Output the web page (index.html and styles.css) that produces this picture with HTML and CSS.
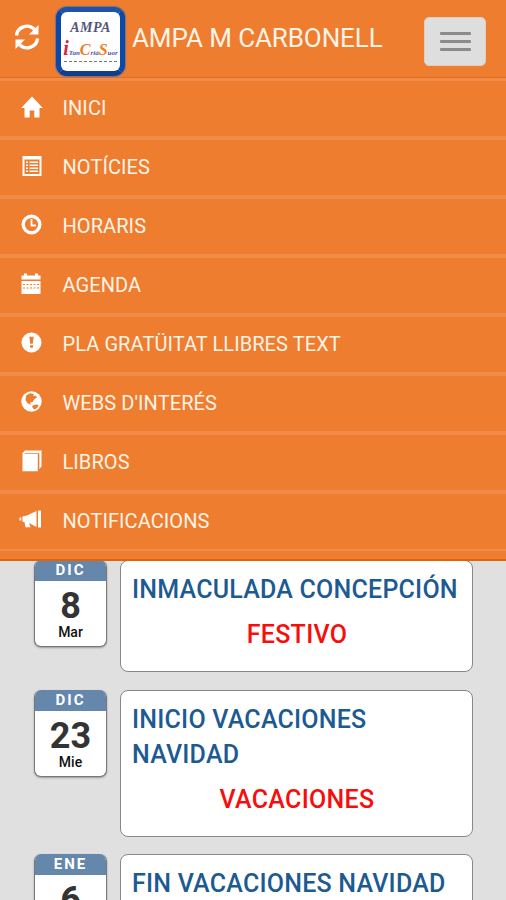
FILE: index.html
```html
<!DOCTYPE html>
<html lang="ca">
<head>
	<meta charset="utf-8" />
	<meta name="viewport" content="width=device-width, user-scalable=no" />
	<title>AMPA M CARBONELL</title>
	<link rel="stylesheet" href="styles.css">
</head>
<body>
	<nav class="navbar">
		<header class="navbar-header">
			<svg class="refresh" viewBox="0 0 26 26">
				<path d="M2.5 11.5A10.5 10 0 0 1 20.4 5.2M23.5 14.5A10.5 10 0 0 1 5.6 20.8" fill="none" stroke="#fff" stroke-width="3.4"/>
				<path d="M24.5 1v9.5H15zM1.5 25v-9.5H11z"/>
			</svg>
			<div class="logo">
				<span class="logo-top">AMPA</span>
				<span class="logo-name"><b class="red">i</b>Tan<b>C</b>rià<b>S</b>uor</span>
				<span class="logo-line"></span>
			</div>
			<a class="brand" href="#">AMPA M CARBONELL</a>
			<button class="toggle" type="button" aria-label="Menu">
				<span></span>
				<span></span>
				<span></span>
			</button>
		</header>
		<ul class="menu">
			<li><a href="#"><svg viewBox="0 0 22 22"><path d="M11 .5 21.8 12H18.500v9.500H13.300v-7H8.700v7H3.500V12H.2z"/></svg>INICI</a></li>
			<li><a href="#"><svg viewBox="0 0 22 22"><path fill-rule="evenodd" d="M1.500 1h19v20h-19zM3.500 4.500v14.500h15V4.500z"/><path d="M5 6.500h2v1.500H5zM8.500 6.500h8.500v1.500H8.500zM5 9.500h2V11H5zM8.500 9.500h8.500V11H8.500zM5 12.500h2V14H5zM8.500 12.500h8.500V14H8.500zM5 15.500h2V17H5zM8.500 15.500h8.500V17H8.500z"/></svg>NOTÍCIES</a></li>
			<li><a href="#"><svg viewBox="0 0 22 22"><circle cx="10.500" cy="10.500" r="8.300" fill="none" stroke="#fff" stroke-width="3.400"/><path d="M10.500 5v6.500H15" fill="none" stroke="#fff" stroke-width="1.800"/></svg>HORARIS</a></li>
			<li><a href="#"><svg viewBox="0 0 22 22"><path d="M.5 2.500H3V.5h3v2h8V.5h3v2h2.500v4H.5z"/><path fill-rule="evenodd" d="M.5 8h19v13H.5zM2 11v1h2V11zM5.500 11v1h2v-1zM9 11v1h2v-1zM12.500 11v1h2v-1zM16 11v1h2v-1zM2 14.500v1h2v-1zM5.500 14.500v1h2v-1zM9 14.500v1h2v-1zM12.500 14.500v1h2v-1zM16 14.500v1h2v-1z"/></svg>AGENDA</a></li>
			<li><a href="#"><svg viewBox="0 0 22 22"><circle cx="10.500" cy="10.500" r="10"/><path class="hole" d="M8.300 4.800h4.400l-.9 7H9.200zM9 13.200h3v2.500H9z"/></svg>PLA GRATÜITAT LLIBRES TEXT</a></li>
			<li><a href="#"><svg viewBox="0 0 22 22"><circle cx="10.500" cy="10.500" r="10.200"/><path class="hole" d="M5.200 4.500 9 2.300l4 .7-1 2 2.500-.5 1.500 2-2.500 1.500-2 3-2.500.5 1 2.300-3.500-1.600L4.500 9zM11 15l3.500-1.500 3 .5-1 2.500-3 2-1.500-1z"/></svg>WEBS D'INTERÉS</a></li>
			<li><a href="#"><svg viewBox="0 0 22 22"><path d="M1.500 3 4 .5h16.500v16L18.300 19V3.300H4.300L3.500 4h13.300v17.200H1.500z"/></svg>LIBROS</a></li>
			<li><a href="#"><svg class="wide" viewBox="0 0 24 22"><path d="M.5 8.500h1.800v3H.5zM3.500 7.500 8 6.500 17.500 2v16L10 14l1.500 4.300H6.500l-1-5-2-.5zM19 1.500h3v17h-3z"/></svg>NOTIFICACIONS</a></li>
		</ul>
	</nav>

	<main class="agenda">
		<article class="event">
			<div class="date">
				<span class="month">DIC</span>
				<span class="day">8</span>
				<span class="weekday">Mar</span>
			</div>
			<div class="card">
				<h2>INMACULADA CONCEPCIÓN</h2>
				<p>FESTIVO</p>
			</div>
		</article>
		<article class="event">
			<div class="date">
				<span class="month">DIC</span>
				<span class="day">23</span>
				<span class="weekday">Mie</span>
			</div>
			<div class="card">
				<h2>INICIO VACACIONES NAVIDAD</h2>
				<p>VACACIONES</p>
			</div>
		</article>
		<article class="event">
			<div class="date">
				<span class="month">ENE</span>
				<span class="day">6</span>
			</div>
			<div class="card">
				<h2>FIN VACACIONES NAVIDAD</h2>
			</div>
		</article>
	</main>
</body>
</html>
```
FILE: styles.css
```css
* {
	box-sizing: border-box;
}

body {
	display: flex;
	flex-direction: column;
	height: 100vh;
	margin: 0;
	overflow: hidden;
	background-color: #e0e0e0;
	font-family: Roboto, "Liberation Sans", sans-serif;
}

a {
	color: #fff3e6;
	text-decoration: none;
}

svg {
	fill: #fff;
}


/* Navigation
 * ========== */

.navbar {
	position: relative;
	z-index: 1;
	flex: none;
	height: 561px;
	background-color: #ee7d30;
	border-bottom: 2px solid #dc6510;
}

.navbar-header {
	display: flex;
	align-items: flex-start;
	height: 78px;
	padding: 6px 20px 0 14px;
	border-bottom: 1px solid #df6d20;
}

.refresh {
	width: 26px;
	height: 26px;
	margin-top: 18px;
}

.logo {
	display: flex;
	flex-direction: column;
	align-items: center;
	width: 69px;
	height: 69px;
	margin: 1px 1px 0 16px;
	padding-top: 8px;
	background-color: #fff;
	border: 5px solid #0d47a8;
	border-top-color: #1c55a8;
	border-bottom-color: #123c8c;
	border-radius: 11px;
	box-shadow: 0 0 1px 1px #7b7080;
	font-family: "Liberation Serif", serif;
	font-style: italic;
	white-space: nowrap;
}

.logo-top {
	color: #55557c;
	font-size: 14px;
	font-weight: bold;
	letter-spacing: .5px;
	line-height: 16px;
}

.logo-name {
	color: #3f57b5;
	font-size: 7px;
	font-weight: bold;
	line-height: 24px;
}

.logo-name b {
	color: #ef7d22;
	font-size: 16px;
}

.logo-name .red {
	color: #df2038;
	font-size: 20px;
}

.logo-line {
	width: 53px;
	margin-top: -4px;
	border-top: 1px dashed #777;
}

.brand {
	margin-left: 6px;
	font-size: 26px;
	letter-spacing: -.1px;
	line-height: 65px;
}

.toggle {
	display: flex;
	flex-direction: column;
	align-items: center;
	justify-content: center;
	gap: 5px;
	width: 62px;
	height: 49px;
	margin: 11px 0 0 auto;
	padding: 0;
	background-color: #dedede;
	border: 1px solid #e2cdbd;
	border-radius: 5px;
}

.toggle span {
	width: 31px;
	height: 3px;
	background-color: #8b8b8b;
	border-radius: 1px;
}

.menu {
	margin: 0;
	padding: 0;
	list-style: none;
	border-top: 3px solid #f18b47;
}

.menu li {
	height: 59px;
	border-bottom: 4px solid #f18b47;
}

.menu li:last-child {
	border-bottom-width: 2px;
	height: 57px;
}

.menu a {
	display: flex;
	align-items: center;
	height: 53px;
	padding-left: 21px;
	font-size: 20px;
	letter-spacing: .08px;
}

.menu svg {
	width: 22px;
	height: 22px;
	margin: -2px 19.500px 0 0;
}

.menu svg.wide {
	width: 24px;
	margin-left: -2px;
}

.hole {
	fill: #ee7d30;
}


/* Agenda
 * ====== */

.agenda {
	flex: 1;
	min-height: 0;
	margin-top: -1px;
	padding: 0 33px 0 34px;
	overflow: hidden;
}

.event {
	display: flex;
	align-items: flex-start;
	gap: 13px;
	margin-bottom: 17.500px;
}

.date {
	display: flex;
	flex-direction: column;
	width: 73px;
	height: 87px;
	overflow: hidden;
	background-color: #fff;
	border: 1px solid #777;
	border-top: 0;
	border-radius: 7px;
	box-shadow: 0 1px 2px #999;
	text-align: center;
}

.month {
	height: 21px;
	background-color: #6487ab;
	color: #fff;
	font-size: 15px;
	font-weight: bold;
	letter-spacing: 2px;
	line-height: 21px;
}

.day {
	height: 43px;
	padding-top: 4px;
	color: #333;
	font-size: 36px;
	font-weight: bold;
	line-height: 42px;
}

.weekday {
	color: #111;
	font-size: 14px;
	font-weight: 500;
	line-height: 16px;
}

.card {
	flex: 1;
	min-height: 112px;
	padding: 11px 10px 19px 11px;
	background-color: #fff;
	border: 1px solid #888;
	border-radius: 8px;
}

.card h2 {
	margin: 0;
	color: #1d5a92;
	font-size: 25px;
	font-weight: 500;
	letter-spacing: .22px;
	line-height: 35px;
}

.card p {
	margin: 10px 0 0;
	color: #f80d0d;
	font-size: 25px;
	font-weight: 500;
	letter-spacing: .3px;
	line-height: 35px;
	text-align: center;
}
```
